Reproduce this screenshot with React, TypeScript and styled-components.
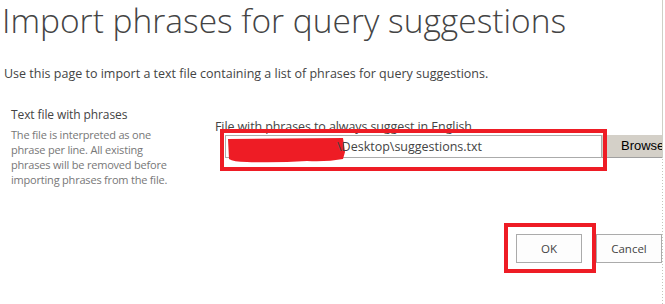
import * as React from 'react'
import styled, { createGlobalStyle } from 'styled-components'

const GlobalStyle = createGlobalStyle`
  html, body {
    margin: 0;
    padding: 0;
    background: #fff;
  }
  body {
    font-family: "Open Sans", "Liberation Sans", sans-serif;
    color: #444;
  }
`

const App = () => {
  return (
    <>
      <GlobalStyle />
      <Frame>
        <Title>Import phrases for query suggestions</Title>
        <Intro>
          Use this page to import a text file containing a list of phrases for
          query suggestions.
        </Intro>
        <Section>
          <SideColumn>
            <SectionTitle>Text file with phrases</SectionTitle>
            <SectionHelp>
              The file is interpreted as one phrase per line. All existing
              phrases will be removed before importing phrases from the file.
            </SectionHelp>
          </SideColumn>
          <FieldColumn>
            <FieldLabel>File with phrases to always suggest in English</FieldLabel>
            <FileRow>
              <FileInput>
                <Scribble viewBox="0 0 118 26" aria-hidden="true">
                  <path
                    d="M1 2 L116 1 L117 8 L118 15 L116 22 Q100 25 80 24 Q50 26 20 25 Q6 25 2 22 Z"
                    fill="#ee1c25"
                  />
                </Scribble>
                <FilePath>\Desktop\suggestions.txt</FilePath>
              </FileInput>
              <BrowseButton>Browse...</BrowseButton>
              <Highlight $top={-6} $left={-5} $width={387} $height={42} />
            </FileRow>
          </FieldColumn>
        </Section>
        <Actions>
          <ActionButton>
            OK
            <Highlight $top={-12} $left={-13} $width={92} $height={50} />
          </ActionButton>
          <ActionButton>Cancel</ActionButton>
        </Actions>
      </Frame>
    </>
  )
}

export default App

// Styles
const Frame = styled.div`
  position: relative;
  width: 663px;
  height: 304px;
  overflow: hidden;

  &::after {
    content: '';
    position: absolute;
    top: 0;
    right: 0;
    width: 1px;
    height: 100%;
    background:
      linear-gradient(to bottom, #cfcfc7 0 158px, transparent 158px),
      repeating-linear-gradient(to bottom, #c4c4bc 0 1px, transparent 1px 3px);
  }
`

const Title = styled.h1`
  margin: 0;
  padding-left: 2px;
  font-weight: 300;
  font-size: 33.5px;
  line-height: 41px;
  color: #444;
  white-space: nowrap;
`

const Intro = styled.p`
  margin: 25px 0 0;
  padding-left: 4px;
  font-size: 12.5px;
  line-height: 16px;
  color: #444;
  white-space: nowrap;
`

const Section = styled.div`
  display: grid;
  grid-template-columns: 215px 1fr;
  margin-top: 25px;
`

const SideColumn = styled.div`
  padding-left: 11px;
`

const SectionTitle = styled.div`
  font-size: 12px;
  line-height: 16px;
  letter-spacing: -0.1px;
  color: #444;
`

const SectionHelp = styled.div`
  margin-top: 4px;
  width: 170px;
  font-size: 11px;
  line-height: 15px;
  letter-spacing: -0.2px;
  color: #777;
`

const FieldColumn = styled.div`
  padding-top: 12px;
`

const FieldLabel = styled.div`
  font-size: 12.5px;
  line-height: 16px;
  letter-spacing: -0.1px;
  color: #444;
  white-space: nowrap;
`

const FileRow = styled.div`
  position: relative;
  display: flex;
  margin-left: 10px;
`

const FileInput = styled.div`
  position: relative;
  box-sizing: border-box;
  width: 377px;
  height: 23px;
  border: 1px solid #ababab;
  background: #fff;
  display: flex;
  align-items: center;
  padding-left: 111px;
`

const FilePath = styled.span`
  position: relative;
  font-size: 12.5px;
  color: #444;
  white-space: nowrap;
`

const Scribble = styled.svg`
  position: absolute;
  left: 1px;
  top: 1px;
  width: 118px;
  height: 26px;
`

const BrowseButton = styled.div`
  box-sizing: border-box;
  height: 23px;
  padding: 0 10px 0 19px;
  background: #d4d0c8;
  border-bottom: 1px solid #a0a0a0;
  font-family: "Liberation Sans", Arial, sans-serif;
  font-size: 13px;
  line-height: 22px;
  color: #000;
  white-space: nowrap;
`

const Highlight = styled.div<{ $top: number; $left: number; $width: number; $height: number }>`
  position: absolute;
  top: ${p => p.$top}px;
  left: ${p => p.$left}px;
  width: ${p => p.$width}px;
  height: ${p => p.$height}px;
  box-sizing: border-box;
  border: 4px solid #ee1c25;
  pointer-events: none;
`

const Actions = styled.div`
  display: flex;
  justify-content: flex-end;
  gap: 14px;
  margin-top: 47px;
  padding-right: 1px;
`

const ActionButton = styled.button`
  position: relative;
  box-sizing: border-box;
  width: 66px;
  height: 29px;
  padding: 0;
  border: 1px solid #ababab;
  background: #fdfdfd;
  font-family: "Open Sans", "Liberation Sans", sans-serif;
  font-size: 11.5px;
  color: #444;
`
